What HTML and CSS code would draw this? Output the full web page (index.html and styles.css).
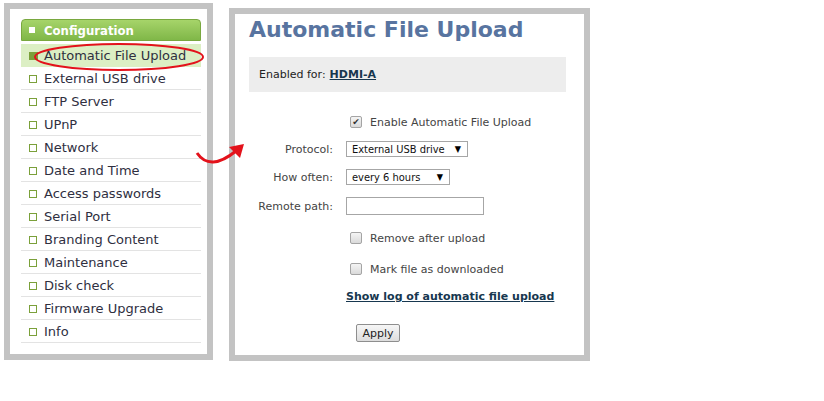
FILE: index.html
```html
<!DOCTYPE html>
<html lang="en">
    <head>
        <meta charset="utf-8">
        <title>Automatic File Upload</title>
        <link rel="stylesheet" href="styles.css">
    </head>
    <body>
        <div class="page">
            <div class="side">
                <div class="side-head"><span class="sq"></span>Configuration</div>
                <ul class="menu">
                    <li class="on">Automatic File Upload</li>
                    <li>External USB drive</li>
                    <li>FTP Server</li>
                    <li>UPnP</li>
                    <li>Network</li>
                    <li>Date and Time</li>
                    <li>Access passwords</li>
                    <li>Serial Port</li>
                    <li>Branding Content</li>
                    <li>Maintenance</li>
                    <li>Disk check</li>
                    <li>Firmware Upgrade</li>
                    <li>Info</li>
                </ul>
            </div>

            <div class="main">
                <h1>Automatic File Upload</h1>
                <div class="enabled">Enabled for: <a href="#">HDMI-A</a></div>

                <div class="form">
                    <div class="row">
                        <div class="lbl"></div>
                        <span class="box checked">&#10004;</span>
                        <span class="opt">Enable Automatic File Upload</span>
                    </div>
                    <div class="row">
                        <div class="lbl">Protocol:</div>
                        <div class="select s1">External USB drive<span class="arr">&#9660;</span></div>
                    </div>
                    <div class="row row-how">
                        <div class="lbl">How often:</div>
                        <div class="select s2">every 6 hours<span class="arr">&#9660;</span></div>
                    </div>
                    <div class="row row-path">
                        <div class="lbl">Remote path:</div>
                        <div class="text"></div>
                    </div>
                    <div class="row row-check">
                        <div class="lbl"></div>
                        <span class="box"></span>
                        <span class="opt">Remove after upload</span>
                    </div>
                    <div class="row row-check2">
                        <div class="lbl"></div>
                        <span class="box"></span>
                        <span class="opt">Mark file as downloaded</span>
                    </div>
                    <div class="row">
                        <div class="lbl"></div>
                        <a class="log" href="#">Show log of automatic file upload</a>
                    </div>
                    <div class="row row-apply">
                        <div class="lbl"></div>
                        <button>Apply</button>
                    </div>
                </div>
            </div>

            <!-- red annotation marks -->
            <svg class="marks" width="260" height="180" viewBox="0 0 260 180">
                <ellipse cx="119" cy="57" rx="84" ry="13" fill="none" stroke="#e3121b" stroke-width="2"/>
                <path d="M197 153 Q210 172 236 151" fill="none" stroke="#e3121b" stroke-width="3"/>
                <polygon points="244,144 229,147 240,158" fill="#e3121b"/>
            </svg>
        </div>
    </body>
</html>
```

FILE: styles.css
```css
*{
    margin: 0;
    padding: 0;
    box-sizing: border-box;
}
body{
    background: #fff;
    font-family: "DejaVu Sans", Verdana, sans-serif;
    color: #333;
}
.page{
    position: relative;
    display: flex;
    align-items: flex-start;
    padding: 3px 0 0 4px;
}

/*左边菜单*/
.side{
    width: 209px;
    height: 357px;
    border: 6px solid #c3c3c3;
    padding: 10px 6px 0 11px;
}
.side-head{
    height: 22px;
    border: 1px solid #79a83f;
    border-radius: 4px 4px 0 0;
    background: linear-gradient(#a6d46a, #80b748);
    color: #fff;
    font-weight: bold;
    font-size: 13px;
    font-stretch: condensed;
    display: flex;
    align-items: center;
    padding-left: 7px;
}
.sq{
    width: 6px;
    height: 6px;
    background: #fff;
    margin-right: 9px;
}
.menu{
    list-style: none;
    margin-top: 3px;
}
.menu li{
    height: 23px;
    border-bottom: 1px solid #e3e3e3;
    font-size: 13px;
    color: #2f2f3f;
    display: flex;
    align-items: center;
    padding-left: 23px;
    position: relative;
}
.menu li::before{
    content: "";
    position: absolute;
    left: 8px;
    top: 8px;
    width: 6px;
    height: 6px;
    border: 1px solid #7ba03a;
}
.menu li.on{
    background: #dcefc4;
    border-bottom-color: #dcefc4;
}
.menu li.on::before{
    background: #7ba03a;
    width: 7px;
}

/*右边内容*/
.main{
    width: 361px;
    height: 353px;
    margin-left: 16px;
    margin-top: 5px;
    border: 6px solid #c3c3c3;
    padding: 1px 18px 0 14px;
}
h1{
    font-size: 22px;
    color: #5874a0;
    font-weight: bold;
    line-height: 30px;
}
.enabled{
    margin-top: 12px;
    height: 35px;
    background: #ededed;
    font-size: 11px;
    color: #222;
    display: flex;
    align-items: center;
    padding-left: 10px;
}
.enabled a{
    font-weight: bold;
    color: #17374f;
    margin-left: 4px;
}
.form{
    display: flex;
    flex-direction: column;
    gap: 9px;
    padding-top: 21px;
    font-size: 11px;
    color: #444;
}
.row{
    display: flex;
    align-items: center;
    height: 18px;
}
.row-how{
    margin-top: 1px;
}
.row-path{
    margin-top: 2px;
}
.row-check{
    margin-top: 5px;
}
.row-check2{
    margin-top: 4px;
}
.row-apply{
    margin-top: 10px;
}
.lbl{
    width: 84px;
    margin-right: 13px;
    text-align: right;
}
.box{
    width: 12px;
    height: 12px;
    margin-left: 4px;
    margin-right: 8px;
    border: 1px solid #a4a4a4;
    border-radius: 2px;
    background: linear-gradient(#f4f4f4, #dadada);
    font-size: 9px;
    line-height: 10px;
    text-align: center;
    color: #333;
}
.select{
    height: 16px;
    border: 1px solid #a6a6a6;
    background: #fff;
    color: #111;
    font-stretch: condensed;
    display: flex;
    align-items: center;
    justify-content: space-between;
    padding: 0 6px 0 5px;
}
.s1{
    width: 122px;
}
.s2{
    width: 104px;
}
.arr{
    font-size: 9px;
    color: #000;
}
.text{
    width: 138px;
    height: 18px;
    border: 1px solid #a6a6a6;
}
.log{
    font-weight: bold;
    color: #17374f;
}
button{
    margin-left: 10px;
    width: 44px;
    height: 18px;
    border: 1px solid #8e8e8e;
    border-radius: 2px;
    background: linear-gradient(#f6f6f6, #dddddd);
    font-family: inherit;
    font-size: 11px;
    color: #222;
}

/*红色标注*/
.marks{
    position: absolute;
    left: 0;
    top: 0;
}
```
